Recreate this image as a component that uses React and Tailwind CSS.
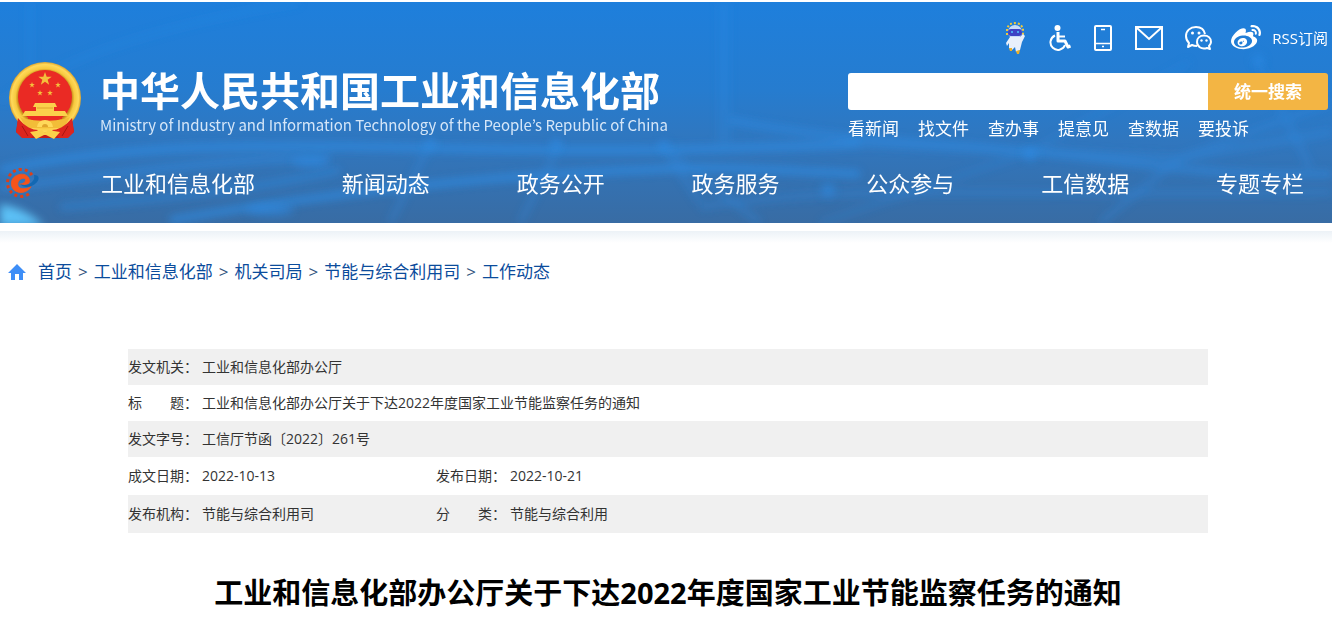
import React, { useState } from 'react';
import { FaWeibo } from 'react-icons/fa';

const QUICK_LINKS = ['看新闻', '找文件', '查办事', '提意见', '查数据', '要投诉'];

const NAV_ITEMS = ['工业和信息化部', '新闻动态', '政务公开', '政务服务', '公众参与', '工信数据', '专题专栏'];

const CRUMBS = ['首页', '工业和信息化部', '机关司局', '节能与综合利用司', '工作动态'];

const TITLE = '工业和信息化部办公厅关于下达2022年度国家工业节能监察任务的通知';

// Each row is a list of [label, value] pairs; one pair spans the full width.
const META_ROWS = [
  [['发文机关：', '工业和信息化部办公厅']],
  [['标　　题：', TITLE]],
  [['发文字号：', '工信厅节函〔2022〕261号']],
  [['成文日期：', '2022-10-13'], ['发布日期：', '2022-10-21']],
  [['发布机构：', '节能与综合利用司'], ['分　　类：', '节能与综合利用']],
];

function HeaderBackdrop() {
  return (
    <svg className="absolute inset-0 h-full w-full" viewBox="0 0 1332 221" preserveAspectRatio="none" aria-hidden="true">
      <defs>
        <linearGradient id="sky" x1="0" y1="0" x2="0" y2="1">
          <stop offset="0" stopColor="#1e7fdc" />
          <stop offset="0.4" stopColor="#267ccf" />
          <stop offset="0.65" stopColor="#3176bd" />
          <stop offset="1" stopColor="#386ca4" />
        </linearGradient>
        <filter id="soft" x="-10%" y="-30%" width="120%" height="160%">
          <feGaussianBlur stdDeviation="4" />
        </filter>
      </defs>
      <rect width="1332" height="221" fill="url(#sky)" />
      <g filter="url(#soft)" fill="none" stroke="#2f8fe8" strokeWidth="7" opacity="0.7">
        <path d="M0 168C120 142 260 142 430 146S700 148 860 142" />
        <path d="M0 186C160 166 240 156 330 156" opacity="0.7" />
        <path d="M170 218C290 198 420 180 560 172S700 164 860 172" />
        <path d="M60 205C180 196 260 186 340 168" opacity="0.6" />
        <path d="M730 118C850 142 950 138 1090 156S1260 172 1332 172" opacity="0.7" />
        <path d="M860 142L1040 150 1180 156 1332 130" opacity="0.5" />
        <path d="M700 205C860 180 1000 196 1332 190" opacity="0.4" />
        <path d="M724 0V140" strokeWidth="14" opacity="0.3" />
        <path d="M430 142L390 221M560 142L520 221M664 146L700 200M760 221L664 146" opacity="0.4" />
        <path d="M0 100C60 60 140 26 300 0M30 0V70" opacity="0.35" />
        <path d="M820 221L1030 150 1190 60" opacity="0.3" />
        <path d="M1100 221L1180 156 1332 100M1258 60L1310 165" opacity="0.4" />
      </g>
      <g filter="url(#soft)" fill="#2f90ea" opacity="0.5">
        <circle cx="430" cy="142" r="6" />
        <circle cx="556" cy="142" r="6" />
        <circle cx="664" cy="144" r="6" />
        <circle cx="1030" cy="152" r="7" />
        <circle cx="1258" cy="58" r="6" />
        <circle cx="828" cy="188" r="7" />
        <ellipse cx="270" cy="208" rx="24" ry="6" />
        <ellipse cx="310" cy="160" rx="18" ry="5" />
      </g>
      <path d="M0 202C18 205 32 212 44 224H0Z" fill="#5cc0f5" filter="url(#soft)" />
    </svg>
  );
}

function Star({ x, y, r }) {
  return (
    <path
      transform={`translate(${x} ${y}) scale(${r})`}
      fill="#f4bf3c"
      d="M0-1L.24-.31 .95-.31 .38.12 .59.81 0 .4-.59.81-.38.12-.95-.31-.24-.31Z"
    />
  );
}

function Emblem() {
  return (
    <svg className="h-[78px] w-[74px] shrink-0" viewBox="0 0 74 78" role="img" aria-label="国徽">
      <defs>
        <radialGradient id="gold">
          <stop offset="0.75" stopColor="#c98a1c" />
          <stop offset="0.82" stopColor="#f7c93f" />
          <stop offset="0.93" stopColor="#ffd95a" />
          <stop offset="1" stopColor="#e0a52c" />
        </radialGradient>
      </defs>
      <path d="M11 52L8 70 16 76H58L66 70 63 52Z" fill="#c71d18" />
      <circle cx="37" cy="36" r="36" fill="url(#gold)" />
      <circle cx="37" cy="35" r="27" fill="#ea2a24" />
      <Star x={37} y={17} r={7} />
      <Star x={24} y={23} r={3} />
      <Star x={50} y={23} r={3} />
      <Star x={32} y={31} r={3} />
      <Star x={42} y={31} r={3} />
      <path d="M27 41H47L49 45H46V49H57L60 54H14L17 49H28V45H25Z" fill="#fbd14b" />
      <path d="M29 46H45" stroke="#e0a52c" />
      <path d="M12 55C22 60 52 60 62 55L56 66H18Z" fill="#f2bd38" />
      <path d="M20 56H54" stroke="#ea2a24" strokeWidth="2" />
      <path d="M10 56C17 65 25 68 30 68L23 76H14L8 70ZM64 56C57 65 49 68 44 68L51 76H60L66 70Z" fill="#dc251e" />
      <path d="M14 64L20 74M60 64L54 74" stroke="#a81612" />
      <path d="M29 65A8 7 0 0 1 45 65Z" fill="#ffd95a" />
      <path d="M34 65A3 3 0 0 1 40 65Z" fill="#e0a52c" />
      <path d="M22 70L34 68 37 71 40 68 52 70 46 77 38 73H36L28 77Z" fill="#fbd14b" />
    </svg>
  );
}

function GearLogo() {
  return (
    <svg className="h-[30px] w-[34px] shrink-0" viewBox="0 0 34 30" aria-hidden="true">
      <path d="M26 7A13.500 13.500 0 1 0 25 24" fill="none" stroke="#dc4019" strokeWidth="3" strokeDasharray="3 3" />
      <path
        transform="translate(3 3) scale(.82)"
        d="M25 12C25 7 20 3 14 4C7 5 2 10 3 17C4 24 11 27 17 26C21 25 25 23 27 19C22 22 17 22 14 21C10 19 10 15 12 12C14 9 19 8 20 10C21 13 17 16 13 16C19 18 25 17 25 12Z"
        fill="#f5541a"
        stroke="#f5541a"
      />
      <path d="M14 16C21 19 30 14 28 7C34 7 34 12 29 16C24 20 17 20 14 16Z" fill="#1268b3" />
    </svg>
  );
}

function RobotIcon() {
  return (
    <svg className="h-8 w-5" viewBox="0 0 20 32" aria-hidden="true">
      <path d="M2 13V6L5 2 10 1 15 2 18 6V13" fill="none" stroke="#f0c93a" strokeWidth="2" strokeDasharray="2 2" />
      <ellipse cx="10" cy="10" rx="7" ry="7" fill="#c8dcf8" />
      <rect x="3" y="7" width="14" height="7" rx="3" fill="#3f43c4" />
      <circle cx="7" cy="10" r="1" fill="#4fc6ff" />
      <circle cx="13" cy="10" r="1" fill="#4fc6ff" />
      <path d="M5 15H15L18 12 20 14 17 20 15 28 11 30 10 25 7 28 4 26 4 21 2 24 1 21Z" fill="#e9f0fb" />
      <path d="M4 26L7 26 7 29 5 29ZM11 29L15 28 14 32 12 32Z" fill="#e9b02c" />
    </svg>
  );
}

function WheelchairIcon() {
  return (
    <svg className="h-[26px] w-[22px]" viewBox="0 0 22 26" fill="none" stroke="white" aria-hidden="true">
      <circle cx="8.500" cy="3" r="3" fill="white" stroke="none" />
      <path d="M9 7V16H16L19 22L21.500 21" strokeWidth="3" strokeLinejoin="round" />
      <path d="M9 11.500H16" strokeWidth="2" />
      <path d="M6 10.500A7.500 7.500 0 1 0 16 20" strokeWidth="2" />
    </svg>
  );
}

function PhoneIcon() {
  return (
    <svg className="h-[26px] w-5" viewBox="0 0 20 26" fill="none" stroke="white" aria-hidden="true">
      <rect x="2" y="1" width="16" height="24" rx="1" strokeWidth="2" />
      <path d="M2 18.500H18M8 4.500H12M9 21.500H11" strokeWidth="1.500" />
    </svg>
  );
}

function MailIcon() {
  return (
    <svg className="h-6 w-7" viewBox="0 0 28 24" fill="none" stroke="white" strokeWidth="2" aria-hidden="true">
      <rect x="1" y="1" width="26" height="22" />
      <path d="M2 2L14 13 26 2" />
    </svg>
  );
}

function WechatIcon() {
  return (
    <svg className="h-6 w-[27px]" viewBox="0 0 27 24" fill="none" stroke="white" strokeWidth="2" aria-hidden="true">
      <path d="M20 8C19 3 15 1 11 1C5 1 1 5 1 10C1 13 2 15 4 17L3 21L7 19C9 20 10 20 12 20" strokeLinejoin="round" />
      <path d="M19 9.500C23 9.500 26 12 26 16C26 18 25 19 24 20L25 23L22 22C16 24 12 20 12 16C12 12 15 9.500 19 9.500Z" strokeLinejoin="round" />
      <g fill="white" stroke="none">
        <circle cx="7.500" cy="7" r="1.500" />
        <circle cx="14" cy="7" r="1.500" />
        <circle cx="16.500" cy="14.500" r="1.200" />
        <circle cx="21.500" cy="14.500" r="1.200" />
      </g>
    </svg>
  );
}

function HomeIcon() {
  return (
    <svg className="h-4 w-[18px]" viewBox="0 0 18 16" fill="#3e8ef7" aria-hidden="true">
      <path d="M9 0L18 9H15V16H11V10H7V16H3V9H0Z" />
    </svg>
  );
}

function ToolBar() {
  return (
    <div className="flex items-center justify-end whitespace-nowrap text-white">
      <a href="#robot" aria-label="智能问答" className="mr-6"><RobotIcon /></a>
      <a href="#accessible" aria-label="无障碍" className="mr-[22px]"><WheelchairIcon /></a>
      <a href="#mobile" aria-label="手机版" className="mr-[22px]"><PhoneIcon /></a>
      <a href="#mail" aria-label="邮箱" className="mr-[22px]"><MailIcon /></a>
      <a href="#wechat" aria-label="微信" className="mr-[18px]"><WechatIcon /></a>
      <a href="#weibo" aria-label="微博" className="mr-2.5"><FaWeibo className="h-[30px] w-8" /></a>
      <a href="#rss" className="text-[15px]">RSS订阅</a>
    </div>
  );
}

function SearchBox() {
  const [query, setQuery] = useState('');

  return (
    <form className="flex h-[37px]" onSubmit={(e) => e.preventDefault()}>
      <input
        type="text"
        aria-label="搜索"
        value={query}
        onChange={(e) => setQuery(e.target.value)}
        className="min-w-0 flex-1 rounded-l-[3px] bg-white px-3 text-[17px] text-gray-800 outline-none"
      />
      <button type="submit" className="w-[120px] rounded-r-[3px] bg-[#f3b544] text-[17px] font-bold text-white">
        统一搜索
      </button>
    </form>
  );
}

function Header() {
  return (
    <header className="relative mt-0.5 overflow-hidden pb-6 text-white">
      <HeaderBackdrop />
      <div className="relative flex justify-between pt-5 pr-1 pl-2">
        <div className="flex items-start pt-10">
          <Emblem />
          <div className="ml-[18px] whitespace-nowrap pt-[5px]">
            <p className="text-[40px] leading-[48px] font-bold">中华人民共和国工业和信息化部</p>
            {/* the KR cut keeps the apostrophe proportional */}
            <p lang="en" className="font-['Noto_Sans_CJK_KR',sans-serif] text-[15px] leading-5 text-[#d5e6f8]">
              Ministry of Industry and Information Technology of the People’s Republic of China
            </p>
          </div>
        </div>
        <div className="w-[480px]">
          <ToolBar />
          <div className="mt-[19px]">
            <SearchBox />
          </div>
          <div className="mt-[7px] flex gap-[19px] text-[17px] leading-6">
            {QUICK_LINKS.map((name) => (
              <a key={name} href="#search">{name}</a>
            ))}
          </div>
        </div>
      </div>
      <div className="relative mt-[26px] flex items-center pr-7 pl-1.5">
        <GearLogo />
        <nav className="ml-[61px] flex flex-1 justify-between text-[22px] leading-8 whitespace-nowrap">
          {NAV_ITEMS.map((name) => (
            <a key={name} href="#nav">{name}</a>
          ))}
        </nav>
      </div>
    </header>
  );
}

function Breadcrumb() {
  return (
    <nav aria-label="当前位置" className="flex items-center pl-2 text-[17px] leading-6 text-[#0b4c9c]">
      <HomeIcon />
      <ol className="ml-3 flex">
        {CRUMBS.map((name, i) => (
          <li key={name}>
            {i > 0 && <span className="mx-1.5 text-[#33557f]">&gt;</span>}
            <a href="#crumb">{name}</a>
          </li>
        ))}
      </ol>
    </nav>
  );
}

function MetaTable() {
  return (
    <table className="mx-auto w-full max-w-[1080px] table-fixed text-left text-sm text-[#333]">
      <colgroup>
        <col className="w-[74px]" />
        <col className="w-[234px]" />
        <col className="w-[74px]" />
        <col />
      </colgroup>
      <tbody>
        {META_ROWS.map((row) => (
          <tr key={row[0][0]} className={`odd:bg-[#f0f0f0] ${row.length > 1 ? 'h-[38px]' : 'h-9'}`}>
            {row.map(([label, value]) => (
              <React.Fragment key={label}>
                <th scope="row" className="font-normal whitespace-nowrap">{label}</th>
                <td colSpan={row.length > 1 ? 1 : 3}>{value}</td>
              </React.Fragment>
            ))}
          </tr>
        ))}
      </tbody>
    </table>
  );
}

export default function App() {
  return (
    <div lang="zh-CN" className="bg-white font-['Open_Sans','Noto_Sans_CJK_SC',sans-serif]">
      <Header />
      <div className="mt-2 h-3 bg-linear-to-b from-[#ecf2f7] to-white" />
      <main className="pt-[17px]">
        <Breadcrumb />
        <article className="pt-[65px] pl-1">
          <MetaTable />
          <h1 className="mt-10 text-center text-[29px] leading-10 font-bold text-black">{TITLE}</h1>
        </article>
      </main>
    </div>
  );
}
